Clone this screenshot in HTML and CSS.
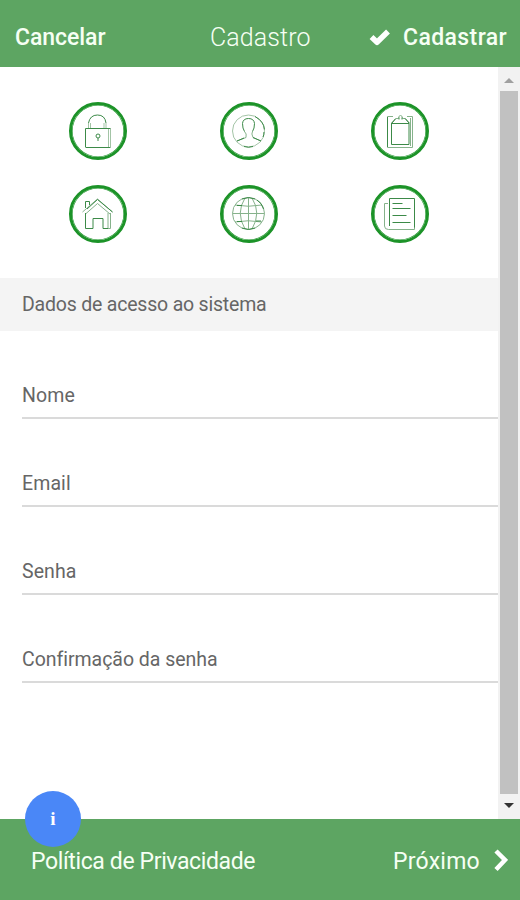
FILE: index.html
```html
<!DOCTYPE html>
<html lang="pt-BR">
<head>
<meta charset="utf-8">
<title>Cadastro</title>
<link rel="stylesheet" href="styles.css">
</head>
<body>
<div class="app">
  <header class="topbar">
    <span class="cancel">Cancelar</span>
    <span class="title">Cadastro</span>
    <span class="submit">
      <svg class="check" viewBox="0 0 22 18"><path d="M2.500 8 8 13.300 19 2.500" /></svg>
      <span class="submit-text">Cadastrar</span>
    </span>
  </header>
  <div class="body">
    <main class="content">
      <nav class="steps">
        <span class="step"><svg viewBox="0 0 52 52"><path d="M38.500 23.500v18.500M36.500 24v18M16.500 23v-5M18.500 23v-5M32 23v-5M34 23v-5"/><path class="strong" d="M13.500 42V23.500h25M13.500 42.500h25M16.500 18q1.500-8 9-8t8.500 8"/><circle class="strong" cx="26" cy="31" r="2"/><path class="strong" d="M26 33v3"/></svg></span>
        <span class="step"><svg viewBox="0 0 52 52"><circle cx="25.500" cy="26" r="16"/><path class="mid" d="M23 32.500 14 36M30 32.500l8 3.500M21.500 26.500q2.500 2 1.500 6M29.500 26.500q-1.500 2 .5 6"/><path class="strong" d="M21.500 26.500q-2-3-2-8 .5-5 6-5t6 5q0 5-2 8M32 11.500q9 5 9.500 13M14 36l7-3M30 32.500l8 3.500M41 27q0 3-1 5M21 41.500q4.500 1.500 9 0"/></svg></span>
        <span class="step"><svg viewBox="0 0 52 52"><path class="mid" d="M19 11.500h-5.500v31h25v-31H33M36.500 13v28"/><path class="strong" d="M13.500 12v30M17.500 18v21.500h17.500V18M17.500 18.500h17.500"/><path class="mid" d="m17.500 18 4-4.500h3q0-3 2-3t2 3h3l4 4.500"/><path class="strong" d="m18 18 3.500-4M25 12.500v2M28 12.500v2M31 13.500l4 4.500"/></svg></span>
        <span class="step"><svg viewBox="0 0 52 52"><path class="mid" d="m10.500 24 15-13 15 13M13.500 26 25.500 15.500 38 26M36 25v15"/><path class="mid" d="M38.500 25v15.500H31"/><path class="strong" d="M13.500 20v-6.500h4V17M15 21l10.500-9.500L40.500 24M13.500 25v15.500h7.500v-10h10v10h5"/></svg></span>
        <span class="step"><svg viewBox="0 0 52 52"><circle class="mid" cx="25.500" cy="25.500" r="16"/><path class="mid" d="M9.500 25.500h32M25.500 9.500v32M12 17q13 2.500 27 0M12 34q13-2.500 27 0M22 10q-9.500 15 0 31M29 10q9.500 15 0 31"/><path class="strong" d="M19 11q6.500-3 13 0M19 40q6.500 3 13 0M34 12q5 3 6.500 9M14 17.500h5M14 33.500h5M33 33h5"/></svg></span>
        <span class="step"><svg viewBox="0 0 52 52"><path class="mid" d="M14 15.500h-3.500V38q0 3.500 4 3.500h26V38"/><path class="strong" d="M15.500 38V10.500h25v29M18.500 15.500h10M18.500 20.500h18M18.500 27.500h14M18.500 34.500h18"/></svg></span>
      </nav>
      <h2 class="section">Dados de acesso ao sistema</h2>
      <div class="field"><label>Nome</label></div>
      <div class="field"><label>Email</label></div>
      <div class="field"><label>Senha</label></div>
      <div class="field"><label class="confirm">Confirmação da senha</label></div>
    </main>
    <div class="scrollbar">
      <svg class="arrow up" viewBox="0 0 10 5"><path d="M0 5 5 0l5 5z"/></svg>
      <div class="thumb"></div>
      <svg class="arrow down" viewBox="0 0 10 5"><path d="M0 0h10L5 5z"/></svg>
    </div>
  </div>
  <footer class="bottombar">
    <span class="info">i</span>
    <span class="policy">Política de Privacidade</span>
    <span class="next"><span class="next-text">Próximo</span>
      <svg class="chevron" viewBox="0 0 14 24"><path d="m2 2 9 9-9 9.500"/></svg>
    </span>
  </footer>
</div>
</body>
</html>
```
FILE: styles.css
```css
* { box-sizing: border-box; }
body { margin: 0; font-family: Roboto, "Liberation Sans", sans-serif; background: #fff; }
.app { width: 520px; height: 900px; display: flex; flex-direction: column; overflow: hidden; }

.topbar { height: 67px; flex: none; display: grid; grid-template-columns: 195px 159px 1fr; align-items: center; padding: 8px 10px 0 15px; background: #5da562; color: #f6fff4; font-size: 23px; white-space: nowrap; }
.cancel { font-weight: 500; letter-spacing: -.05px; }
.title { font-weight: 300; font-size: 25px; letter-spacing: .1px; }
.submit { display: flex; align-items: center; gap: 12px; font-weight: 500; }
.submit-text { letter-spacing: .4px; }
.check { width: 22px; height: 18px; }
.check path { fill: none; stroke: #fff; stroke-width: 5.500; stroke-linejoin: round; }

.body { flex: 1; display: flex; min-height: 0; }
.content { width: 498px; }
.steps { height: 211px; padding: 35px 0 0 22px; display: grid; grid-template-columns: repeat(3, 151px); grid-auto-rows: 58px; row-gap: 25px; justify-items: center; }
.step { width: 58px; height: 58px; border: 3px solid #1c9328; border-radius: 50%; box-shadow: inset 0 0 0 .6px #1c9328; }
.step svg { display: block; width: 52px; height: 52px; fill: none; stroke: #a3c4a6; stroke-width: 1; }
.step .mid { stroke: #86b28b; }
.step .strong { stroke: #3c8a48; }

.section { margin: 0; height: 53px; padding-left: 22px; line-height: 54px; background: #f4f4f4; color: #666; font-size: 19.500px; font-weight: 400; letter-spacing: -.2px; }
.field { height: 88px; margin-left: 22px; padding-top: 51px; border-bottom: 2px solid #dadada; color: #666; font-size: 19.500px; line-height: 28px; letter-spacing: .1px; }
.confirm { letter-spacing: -.03px; }

.scrollbar { width: 22px; padding: 11px 2px 11px; display: flex; flex-direction: column; align-items: center; background: #f2f2f2; }
.arrow { width: 10px; height: 5px; }
.up { fill: #a0a0a0; }
.down { fill: #333; }
.thumb { width: 18px; flex: 1; margin: 8px 0 9px; background: #c1c1c1; }

.bottombar { position: relative; height: 81px; flex: none; display: flex; justify-content: space-between; align-items: center; padding: 3px 12px 0 31px; background: #5da562; color: #f6fff4; font-size: 23px; }
.policy { letter-spacing: -.37px; }
.info { position: absolute; left: 25px; top: -28px; width: 56px; height: 56px; border-radius: 50%; background: #4a87f7; color: #fff; text-align: center; font: bold 19px/56px "Liberation Serif", serif; }
.next { display: flex; align-items: center; gap: 14px; }
.next-text { letter-spacing: .25px; }
.chevron { width: 14px; height: 24px; }
.chevron path { fill: none; stroke: #fff; stroke-width: 4.500; }
```
